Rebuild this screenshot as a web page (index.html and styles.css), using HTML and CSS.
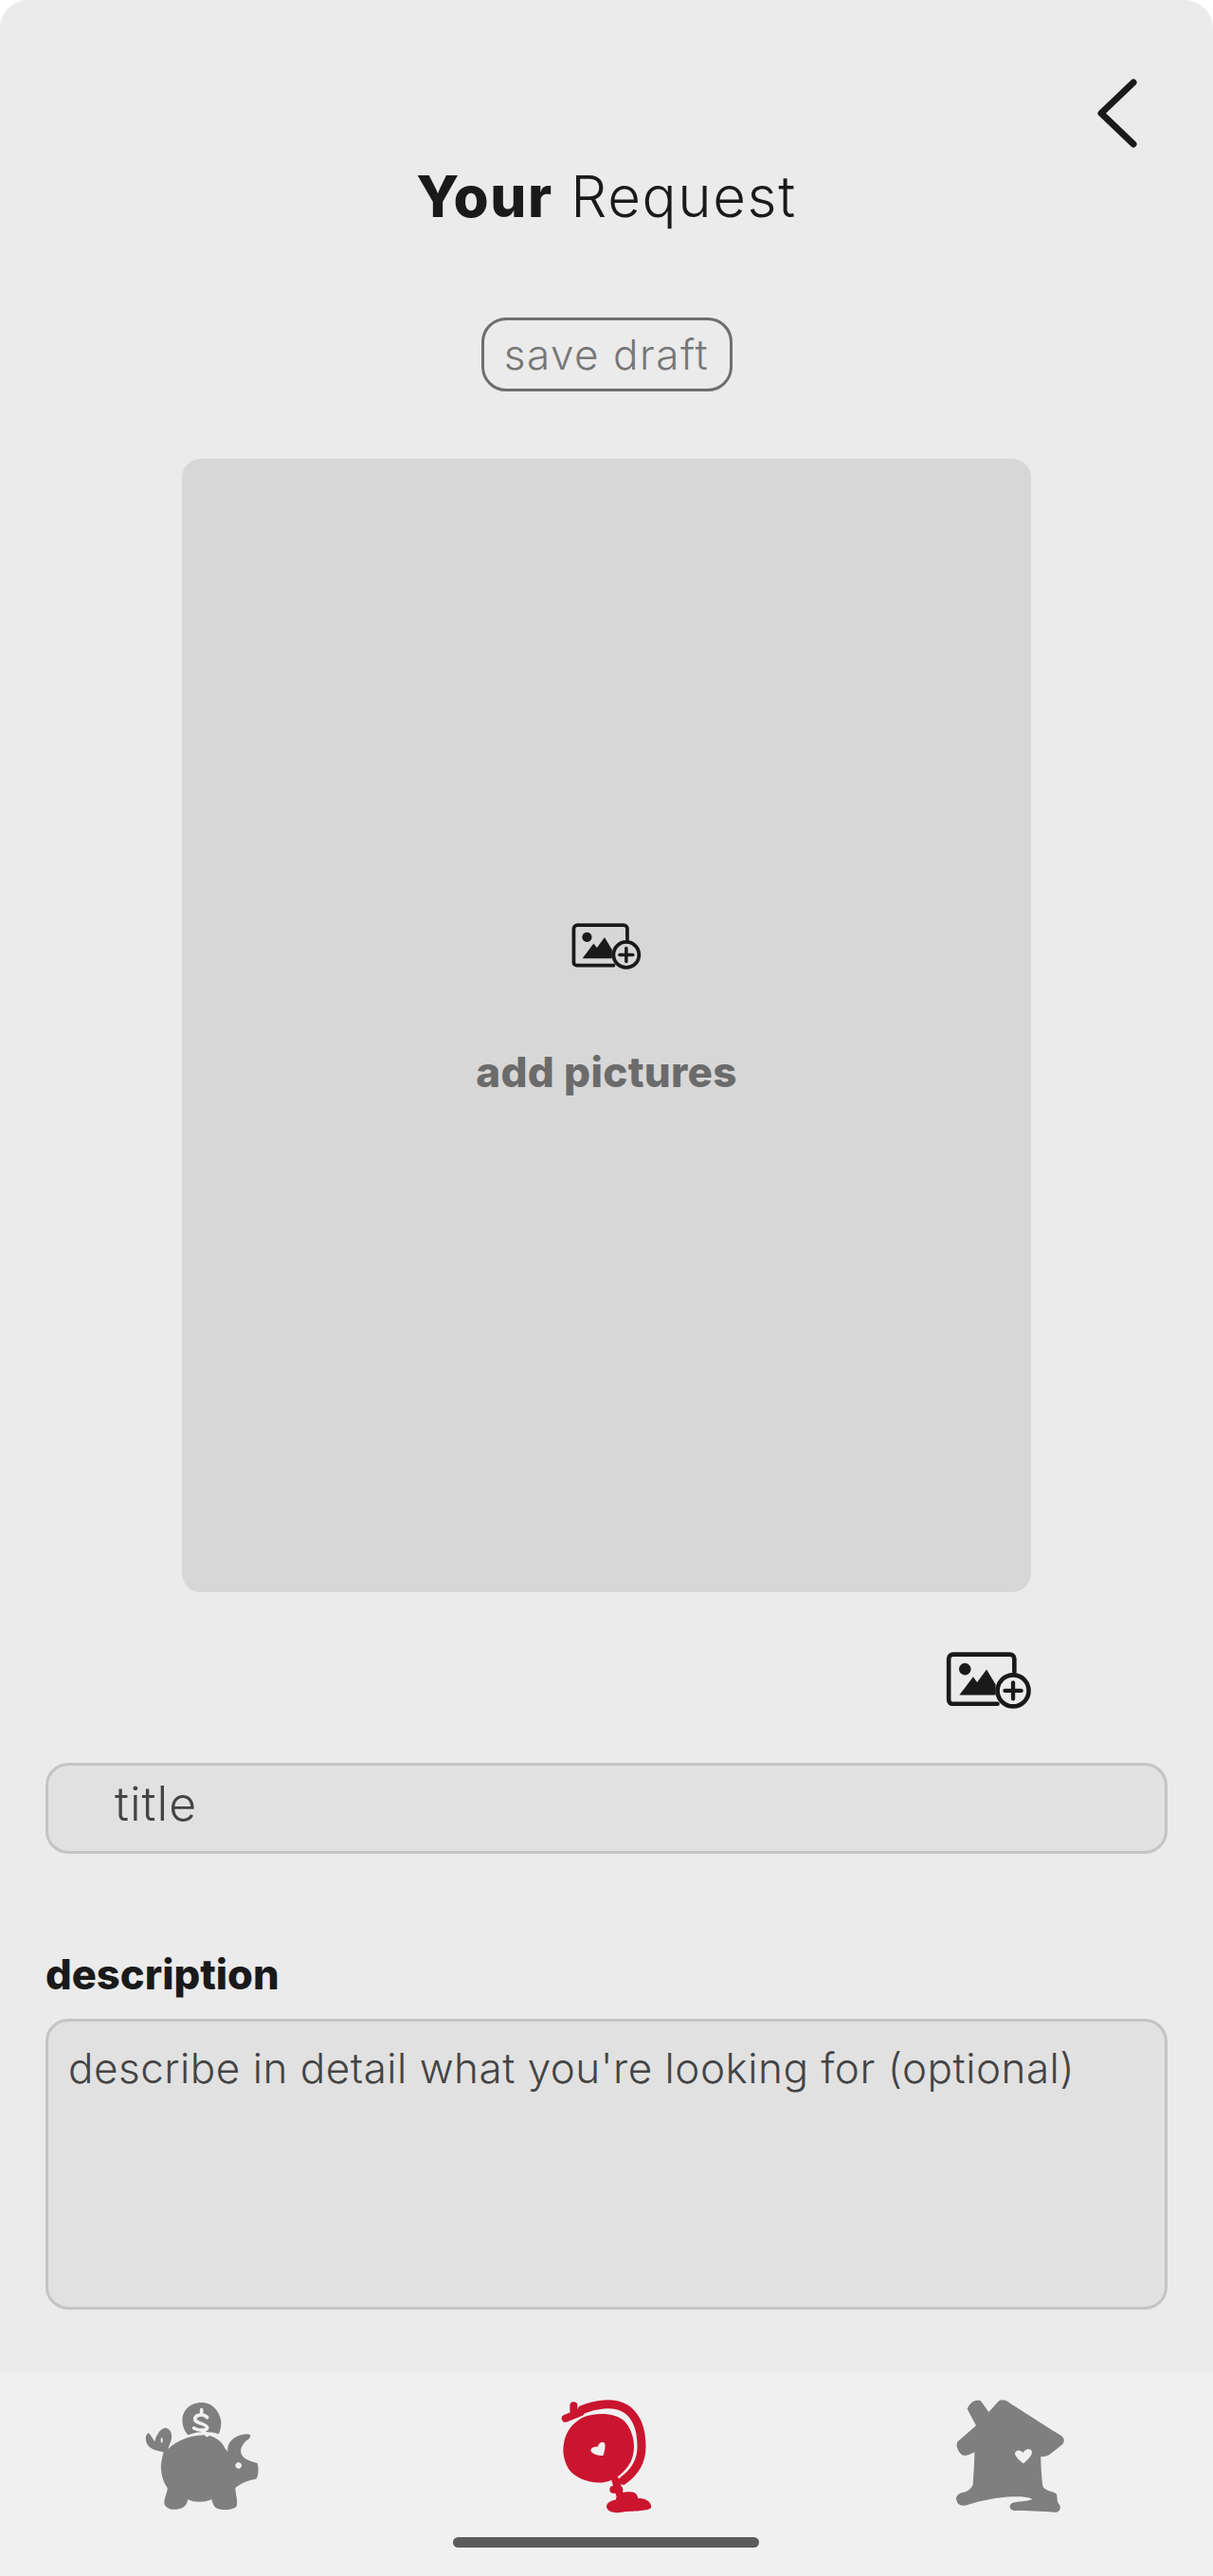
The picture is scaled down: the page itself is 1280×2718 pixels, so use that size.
FILE: index.html
```html
<!DOCTYPE html>
<html lang="en">
<head>
  <meta charset="UTF-8">
  <meta name="viewport" content="width=device-width, initial-scale=1.0">
  <title>Your Request</title>
  <link rel="stylesheet" href="styles.css">
</head>
<body>
  <svg class="defs" width="0" height="0">
    <symbol id="add-image" viewBox="115 128 275 182">
      <path d="M280 294H136a12 12 0 0 1-12-12V150a14 14 0 0 1 14-14H320a14 14 0 0 1 14 14V192" fill="none" stroke="#1a1a1a" stroke-width="14" stroke-linecap="round"/>
      <circle cx="176" cy="183" r="19" fill="#1a1a1a"/>
      <path d="M158 266 202 208 215 225 245 184 274 232V266Z" fill="#1a1a1a"/>
      <circle cx="330" cy="252" r="50" fill="none" stroke="#1a1a1a" stroke-width="14"/>
      <path d="M330 226V278M304 252H356" fill="none" stroke="#1a1a1a" stroke-width="13" stroke-linecap="round"/>
    </symbol>
  </svg>

  <div class="screen">
    <div class="back-row">
      <svg class="back" viewBox="0 0 43 73"><path d="M39 4 5 36.5 39 69" fill="none" stroke="#1a1a1a" stroke-width="7" stroke-linecap="round" stroke-linejoin="round"/></svg>
    </div>
    <h1 class="title"><b>Your</b> Request</h1>
    <div class="draft-row"><button class="draft">save draft</button></div>

    <div class="photo-box">
      <svg class="add-big"><use href="#add-image"/></svg>
      <div class="add-text">add pictures</div>
    </div>

    <div class="add-row">
      <svg class="add-small"><use href="#add-image"/></svg>
    </div>

    <div class="field field-title">title</div>
    <div class="label">description</div>
    <div class="field field-desc">describe in detail what you're looking for (optional)</div>

    <nav class="tabbar">
      <svg class="tab tab-pig" viewBox="0 0 600 510">
        <path fill="#7f7f7f" fill-rule="evenodd" d="M172 252C200 225 240 210 285 208C315 208 342 225 352 250L362 262C355 240 375 205 425 205C440 208 430 220 420 225C405 240 398 255 405 270C415 288 435 290 455 297C460 315 458 340 450 347C425 350 400 362 385 375C385 395 395 420 388 435C375 447 335 447 322 437C315 430 312 420 310 412C285 422 255 422 235 412C232 425 225 440 205 442C185 447 165 440 160 425C160 405 172 385 170 375C155 355 148 325 150 300C152 285 155 272 158 262C140 258 120 255 108 240C98 225 100 205 110 202C118 205 125 225 130 228C135 205 150 185 165 185C185 190 188 215 178 235ZM395 294a10 10 0 1 0 .1 0ZM152 215a3 9 0 1 0 .1 0Z"/>
        <path fill="#7f7f7f" d="M235 208C220 190 215 170 218 150C225 120 250 105 278 105C310 105 335 130 340 165C340 180 338 195 332 205C310 195 260 195 235 208Z"/>
        <path d="M296 152C285 140 260 142 257 156C256 172 292 170 296 184C296 194 272 196 254 186M278 128V142M282 194 296 208" fill="none" stroke="#f0f0f0" stroke-width="11" stroke-linecap="round"/>
      </svg>
      <svg class="tab tab-globe" viewBox="0 0 480 510">
        <path fill="#cb152f" fill-rule="evenodd" d="M165 152C210 134 270 138 298 165C328 200 335 250 318 290C300 325 270 350 230 358C190 362 140 345 120 315C105 290 100 260 105 235C110 195 135 168 165 152ZM228 230C238 230 238 245 230 272C215 275 192 268 190 256C192 246 205 243 212 245C214 236 220 230 228 230Z"/>
        <path d="M162 128C200 112 260 100 300 124C340 150 351 200 351 245C351 290 330 325 292 352" fill="none" stroke="#cb152f" stroke-width="27" stroke-linecap="round"/>
        <path d="M110 155 158 136M136 115V130M268 350 282 396M262 380H280" fill="none" stroke="#cb152f" stroke-width="24" stroke-linecap="round"/>
        <path fill="#cb152f" d="M240 435C240 420 260 415 270 412C270 395 290 388 310 388C330 385 338 395 340 408C360 408 380 415 382 435C380 448 340 448 300 450C280 455 245 458 240 435Z"/>
      </svg>
      <svg class="tab tab-house" viewBox="0 0 540 510">
        <path fill="#7f7f7f" fill-rule="evenodd" d="M122 125C130 105 150 92 165 100L190 135L222 100C235 92 250 100 262 110C310 140 370 180 420 210C432 220 430 232 420 240L385 268C375 275 365 278 355 275C355 310 358 350 362 372C375 388 395 385 405 395C408 410 405 420 415 430C420 445 410 455 395 452C360 448 310 448 270 447C255 445 252 430 265 422C285 418 310 418 328 412C322 405 300 403 270 403C215 405 165 415 120 430C100 435 88 425 87 408C90 392 105 390 115 388C125 385 135 375 140 365C142 330 145 295 145 262C130 270 112 278 102 268C90 255 85 240 92 228L150 178ZM300 265C288 250 272 258 273 268C278 282 292 292 300 298C310 290 327 275 327 262C325 250 310 248 300 262Z"/>
      </svg>
      <div class="home-bar"></div>
    </nav>
  </div>
</body>
</html>
```

FILE: styles.css
```css
body {
  margin: 0;
  background-color: #fff;
  font-family: Inter, "Liberation Sans", sans-serif;
}

.defs {
  position: absolute;
}

.screen {
  width: 1280px;
  height: 2718px;
  background-color: #ebebeb;
  border-radius: 30px 30px 0 0;
  overflow: hidden;
  display: flex;
  flex-direction: column;
}

.back-row {
  display: flex;
  justify-content: flex-end;
  padding: 83px 80px 0 0;
}

.back {
  width: 43px;
  height: 73px;
}

.title {
  margin: 16px 0 0;
  font-size: 60px;
  line-height: 70px;
  font-weight: 300;
  letter-spacing: 1.6px;
  text-align: center;
  color: #1a1a1a;
}

.title b {
  font-weight: 800;
}

.draft-row {
  display: flex;
  justify-content: center;
  margin-top: 93px;
}

.draft {
  width: 265px;
  height: 78px;
  padding: 0;
  background: none;
  border: 3px solid #6e6e6e;
  border-radius: 26px;
  font-family: inherit;
  font-size: 44px;
  font-weight: 300;
  letter-spacing: 1.5px;
  color: #777;
}

.photo-box {
  box-sizing: border-box;
  width: 896px;
  height: 1196px;
  margin: 71px 0 0 192px;
  padding-top: 490px;
  background-color: #d7d7d7;
  border-radius: 20px;
  display: flex;
  flex-direction: column;
  align-items: center;
}

.add-big {
  width: 74px;
  height: 49px;
}

.add-text {
  margin-top: 78px;
  font-size: 44px;
  line-height: 60px;
  font-weight: 800;
  letter-spacing: 0.3px;
  color: #6b6b6b;
}

.add-row {
  display: flex;
  justify-content: flex-end;
  margin-top: 63px;
  padding-right: 191px;
}

.add-small {
  width: 91px;
  height: 60px;
}

.field {
  box-sizing: border-box;
  width: 1184px;
  margin-left: 48px;
  background-color: #e1e1e1;
  border: 3px solid #c4c4c4;
  border-radius: 24px;
}

.field-title {
  height: 96px;
  margin-top: 57px;
  padding: 10px 0 0 70px;
  font-size: 50px;
  line-height: 60px;
  font-weight: 300;
  letter-spacing: 1px;
  color: #444;
}

.label {
  margin: 97px 0 0 48px;
  font-size: 43.5px;
  line-height: 60px;
  font-weight: 800;
  color: #1a1a1a;
}

.field-desc {
  height: 307px;
  margin-top: 17px;
  padding: 19px 0 0 21px;
  font-size: 44px;
  line-height: 60px;
  font-weight: 300;
  letter-spacing: 0.5px;
  color: #444;
}

.tabbar {
  position: relative;
  height: 215px;
  margin-top: 66px;
  padding-left: 120px;
  background-color: #f0f0f0;
  display: flex;
  align-items: flex-start;
}

.tab {
  height: 170px;
  margin-top: -3px;
}

.tab-pig {
  width: 200px;
}

.tab-globe {
  width: 160px;
  margin-left: 240px;
}

.tab-house {
  width: 180px;
  margin-left: 260px;
}

.home-bar {
  position: absolute;
  left: 478px;
  bottom: 30px;
  width: 323px;
  height: 11px;
  border-radius: 6px;
  background-color: #5c5c5c;
}
```
